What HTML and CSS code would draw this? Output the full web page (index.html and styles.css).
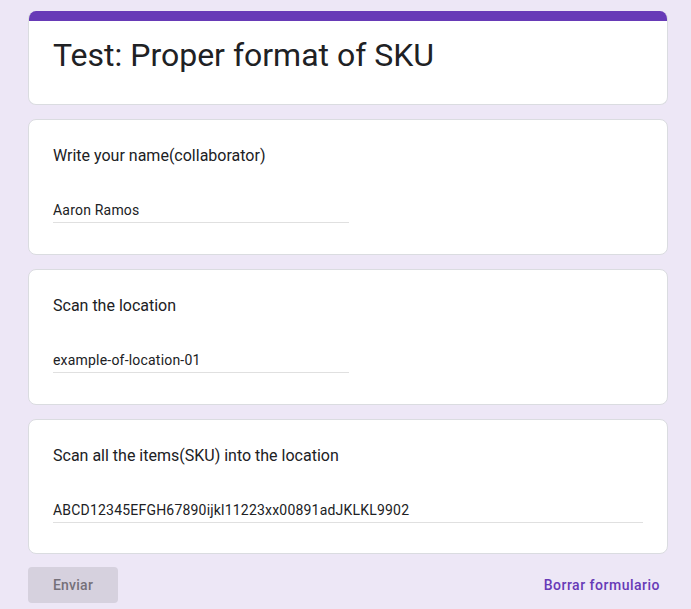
FILE: index.html
```html
<!DOCTYPE html>
<html lang="en">
<head>
<meta charset="utf-8">
<title>Test: Proper format of SKU</title>
<link rel="stylesheet" href="styles.css">
</head>
<body>
<main class="form">
  <section class="card header-card">
    <div class="accent"></div>
    <h1 class="title">Test: Proper format of SKU</h1>
  </section>
  <section class="card question">
    <div class="q-label">Write your name(collaborator)</div>
    <div class="answer half">Aaron Ramos</div>
  </section>
  <section class="card question">
    <div class="q-label">Scan the location</div>
    <div class="answer half">example-of-location-01</div>
  </section>
  <section class="card question last">
    <div class="q-label">Scan all the items(SKU) into the location</div>
    <div class="answer full">ABCD12345EFGH67890ijkl11223xx00891adJKLKL9902</div>
  </section>
  <div class="actions">
    <button class="submit" type="button">Enviar</button>
    <button class="clear" type="button">Borrar formulario</button>
  </div>
</main>
</body>
</html>
```

FILE: styles.css
```css
* { box-sizing: border-box; }
html, body { margin: 0; padding: 0; }
body {
  background: #ede7f6;
  font-family: Roboto, "Noto Sans", Arial, sans-serif;
  color: #202124;
}
.form {
  width: 640px;
  margin-left: 28px;
  padding-top: 11px;
  display: flex;
  flex-direction: column;
  gap: 14px;
}
.card {
  background: #fff;
  border: 1px solid #dadce0;
  border-radius: 8px;
  overflow: hidden;
}
.header-card { border-top: none; }
.accent {
  height: 10px;
  background: #673ab7;
}
.title {
  margin: 0;
  padding: 14px 24px 29px;
  font-size: 32px;
  line-height: 40px;
  font-weight: 400;
  color: #202124;
}
.question {
  padding: 24px 24px 31px;
}
.question.last {
  padding-bottom: 30px;
}
.q-label {
  font-size: 16px;
  line-height: 24px;
  letter-spacing: 0;
  color: #202124;
}
.answer {
  margin-top: 32px;
  font-size: 14px;
  line-height: 20px;
  letter-spacing: 0.2px;
  padding-bottom: 2px;
  border-bottom: 1px solid #e0e0e0;
  color: #202124;
}
.half { width: 296px; }
.full { width: 100%; }
.actions {
  display: flex;
  justify-content: space-between;
  align-items: center;
  margin-top: -1px;
}
.submit {
  width: 90px;
  height: 36px;
  border: none;
  border-radius: 4px;
  background: #d6d1de;
  color: #757079;
  font-family: Roboto, "Noto Sans", Arial, sans-serif;
  font-size: 14px;
  font-weight: 500;
  letter-spacing: 0.25px;
}
.clear {
  height: 36px;
  border: none;
  background: transparent;
  color: #673ab7;
  font-family: Roboto, "Noto Sans", Arial, sans-serif;
  font-size: 14px;
  font-weight: 500;
  letter-spacing: 0.5px;
  padding: 0 8px;
}
```
